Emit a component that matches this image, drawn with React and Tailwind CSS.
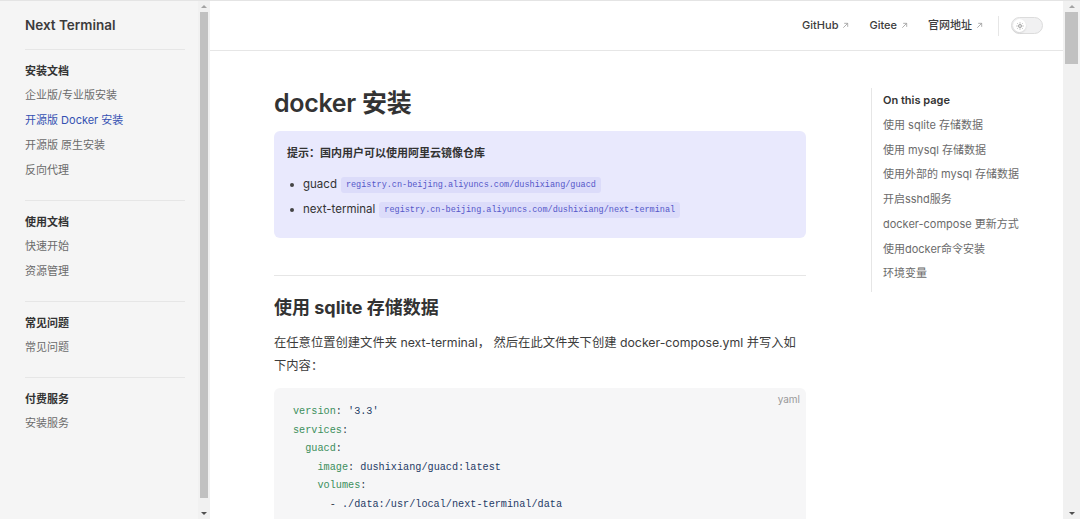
import React from "react";

const sans = { fontFamily: '"Inter", "Noto Sans CJK SC", sans-serif' };

function SideLink({ children, active }) {
  return (
    <div className={`h-[25px] flex items-center text-[11px] ${active ? "text-[#3451b2]" : "text-[#6b6b6b]"}`}>{children}</div>
  );
}

function SideGroup({ title, items, active }) {
  return (
    <div className="pt-[11px] pb-[17px] border-t border-[#e6e6e6]">
      <div className="h-[20px] flex items-center text-[11px] font-bold text-[#333]">{title}</div>
      <div className="mt-[2px]">
        {items.map((it) => (
          <SideLink key={it} active={it === active}>{it}</SideLink>
        ))}
      </div>
    </div>
  );
}

function Scrollbar({ thumbTop, thumbH, w }) {
  return (
    <div className={`relative h-full bg-[#f1f1f1] ${w}`}>
      <div className="absolute top-[4px] left-0 right-0 flex justify-center">
        <div className="w-0 h-0 border-l-[3px] border-r-[3px] border-b-[3px] border-l-transparent border-r-transparent border-b-[#a3a3a3]" />
      </div>
      <div className="absolute left-[2px] right-[2px] bg-[#c1c1c1]" style={{ top: thumbTop, height: thumbH }} />
      <div className="absolute bottom-[4px] left-0 right-0 flex justify-center">
        <div className="w-0 h-0 border-l-[3px] border-r-[3px] border-t-[3px] border-l-transparent border-r-transparent border-t-[#505050]" />
      </div>
    </div>
  );
}

function NavLink({ children }) {
  return (
    <div className="flex items-center gap-[4px] text-[11px] text-[#3c3c3c] font-medium">
      <span>{children}</span>
      <svg width="7" height="7" viewBox="0 0 8 8" className="text-[#9a9a9a]">
        <path d="M1.5 6.5 L6.5 1.5 M2.5 1.5 H6.5 V5.5" fill="none" stroke="currentColor" strokeWidth="0.9" />
      </svg>
    </div>
  );
}

const K = ({ children }) => <span className="text-[#3c8f5c]">{children}</span>;
const V = ({ children }) => <span className="text-[#1f3b66]">{children}</span>;
const P = ({ children }) => <span className="text-[#2f3b4a]">{children}</span>;

export default function App() {
  return (
    <div className="w-[1080px] h-[519px] flex overflow-hidden bg-white border-t border-[#e4e4e4]" style={sans}>
      {/* Sidebar */}
      <div className="w-[198px] h-full bg-[#f5f5f5] pl-[25px] pr-[13px] shrink-0">
        <div className="h-[48px] flex items-center text-[13.5px] font-semibold text-[#3c3c3c]">Next Terminal</div>
        <SideGroup title="安装文档" items={["企业版/专业版安装", "开源版 Docker 安装", "开源版 原生安装", "反向代理"]} active="开源版 Docker 安装" />
        <SideGroup title="使用文档" items={["快速开始", "资源管理"]} />
        <SideGroup title="常见问题" items={["常见问题"]} />
        <SideGroup title="付费服务" items={["安装服务"]} />
      </div>
      <Scrollbar thumbTop={11} thumbH={486} w="w-[12px]" />

      {/* Main */}
      <div className="flex-1 h-full flex flex-col min-w-0">
        <div className="h-[50px] shrink-0 border-b border-[#e6e6e6] flex items-center justify-end pr-[20px]">
          <div className="flex items-center gap-[20px]">
            <NavLink>GitHub</NavLink>
            <NavLink>Gitee</NavLink>
            <NavLink>官网地址</NavLink>
          </div>
          <div className="w-px h-[20px] bg-[#e6e6e6] ml-[15px] mr-[12px]" />
          <div className="w-[32px] h-[17px] rounded-full bg-[#f1f1f2] border border-[#dcdcdc] flex items-center px-[1px]">
            <div className="w-[13px] h-[13px] rounded-full bg-white shadow-[0_1px_2px_rgba(0,0,0,0.12)] flex items-center justify-center">
              <svg width="8" height="8" viewBox="0 0 10 10" fill="none" stroke="#777" strokeWidth="0.9">
                <circle cx="5" cy="5" r="1.8" />
                <path d="M5 0.6v1.2M5 8.2v1.2M0.6 5h1.2M8.2 5h1.2M1.9 1.9l.8.8M7.3 7.3l.8.8M1.9 8.1l.8-.8M7.3 2.7l.8-.8" />
              </svg>
            </div>
          </div>
        </div>

        <div className="flex-1 flex min-h-0">
          {/* Content */}
          <div className="w-[596px] pl-[64px] pt-[36px] shrink-0">
            <h1 className="text-[25px] leading-[32px] font-semibold text-[#333] tracking-[-0.3px]">docker 安装</h1>
            <div className="mt-[12px] bg-[#e9e9fd] rounded-[6px] px-[13px] pt-[13px] pb-[19px]">
              <div className="text-[11px] leading-[18px] font-bold text-[#333]">提示：国内用户可以使用阿里云镜像仓库</div>
              <div className="mt-[14px] flex flex-col gap-[7px]">
                {[
                  ["guacd", "registry.cn-beijing.aliyuncs.com/dushixiang/guacd"],
                  ["next-terminal", "registry.cn-beijing.aliyuncs.com/dushixiang/next-terminal"],
                ].map(([n, c]) => (
                  <div key={n} className="flex items-center h-[18px] text-[11.5px] text-[#333]">
                    <span className="w-[4px] h-[4px] rounded-full bg-[#444] ml-[3px] mr-[9px]" />
                    <span>{n}</span>
                    <span className="ml-[4px] bg-[#dcdcfa] rounded-[3px] px-[5px] h-[16px] flex items-center text-[8.5px] text-[#5457c9]" style={{ fontFamily: '"Liberation Mono", monospace' }}>{c}</span>
                  </div>
                ))}
              </div>
            </div>
            <div className="mt-[37px] border-t border-[#e6e6e6]" />
            <h2 className="mt-[18px] text-[18px] leading-[28px] font-bold text-[#333]">使用 sqlite 存储数据</h2>
            <p className="mt-[9px] text-[12.3px] leading-[23px] text-[#3c3c3c] whitespace-nowrap">
              在任意位置创建文件夹 next-terminal， 然后在此文件夹下创建 docker-compose.yml 并写入如<br />下内容：
            </p>
            <div className="mt-[11px] bg-[#f6f6f7] rounded-[6px] relative pt-[15px] pl-[19px] pb-[20px] h-[160px]">
              <div className="absolute top-[4px] right-[6px] text-[10px] text-[#999]">yaml</div>
              <pre className="text-[10.2px] leading-[18.5px]" style={{ fontFamily: '"Liberation Mono", monospace' }}>
                <K>version</K><P>: </P><V>'3.3'</V>{"\n"}
                <K>services</K><P>:</P>{"\n"}
                {"  "}<K>guacd</K><P>:</P>{"\n"}
                {"    "}<K>image</K><P>: </P><V>dushixiang/guacd:latest</V>{"\n"}
                {"    "}<K>volumes</K><P>:</P>{"\n"}
                {"      "}<P>- </P><V>./data:/usr/local/next-terminal/data</V>
              </pre>
            </div>
          </div>
          {/* TOC */}
          <div className="flex-1 pl-[65px] pt-[37px]">
            <div className="border-l border-[#e6e6e6] pl-[11px] pb-[6px]">
              <div className="h-[25px] flex items-center text-[11px] font-semibold text-[#333]">On this page</div>
              {["使用 sqlite 存储数据", "使用 mysql 存储数据", "使用外部的 mysql 存储数据", "开启sshd服务", "docker-compose 更新方式", "使用docker命令安装", "环境变量"].map((t) => (
                <div key={t} className="h-[24.7px] flex items-center text-[11px] text-[#6b6b6b]">{t}</div>
              ))}
            </div>
          </div>
        </div>
      </div>
      <Scrollbar thumbTop={11} thumbH={52} w="w-[17px]" />
    </div>
  );
}
